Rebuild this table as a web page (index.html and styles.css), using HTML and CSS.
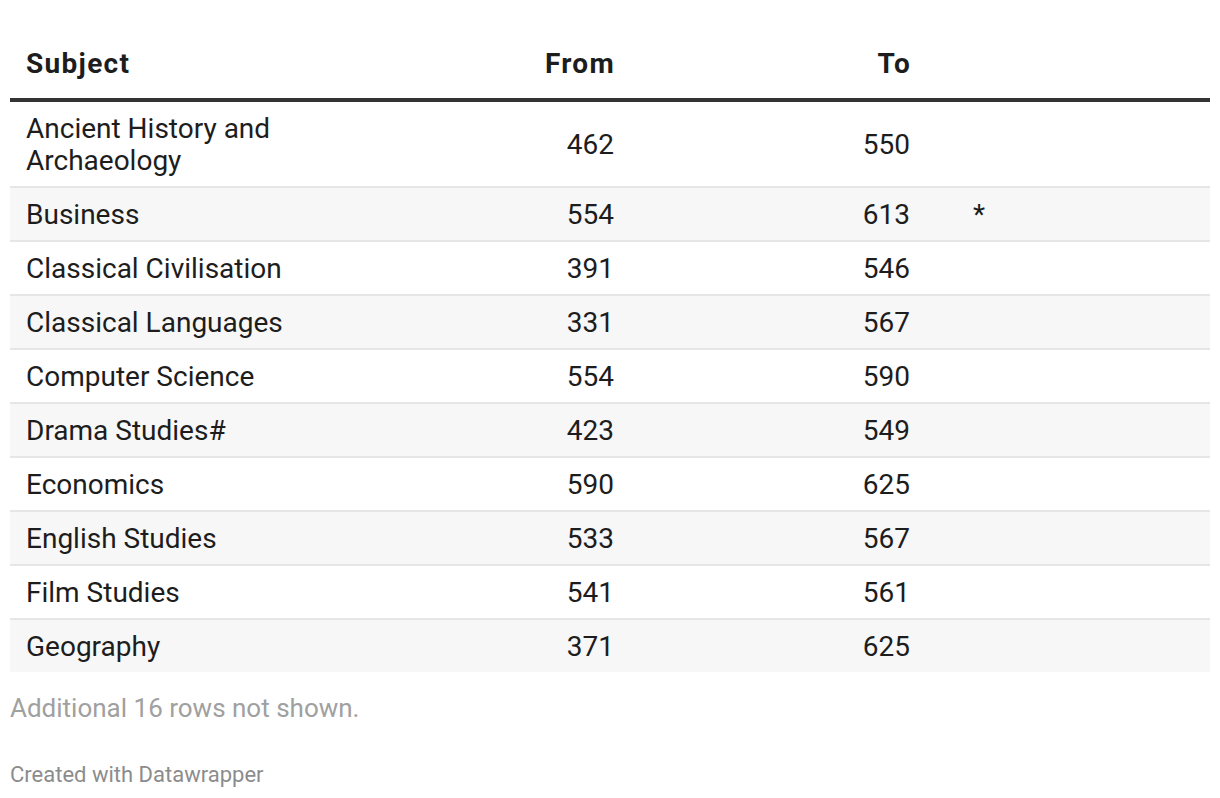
FILE: index.html
```html
<!DOCTYPE html>
<html lang="en">
<head>
<meta charset="utf-8">
<title>Table</title>
<link rel="stylesheet" href="styles.css">
</head>
<body>
<div class="chart">
  <table class="dw-table">
    <colgroup>
      <col class="c-subject">
      <col class="c-from">
      <col class="c-to">
      <col class="c-note">
    </colgroup>
    <thead>
      <tr>
        <th class="left">Subject</th>
        <th class="num">From</th>
        <th class="num">To</th>
        <th class="note"></th>
      </tr>
    </thead>
    <tbody>
      <tr><td class="left">Ancient History and Archaeology</td><td class="num">462</td><td class="num">550</td><td class="note"></td></tr>
      <tr class="alt"><td class="left">Business</td><td class="num">554</td><td class="num">613</td><td class="note">*</td></tr>
      <tr><td class="left">Classical Civilisation</td><td class="num">391</td><td class="num">546</td><td class="note"></td></tr>
      <tr class="alt"><td class="left">Classical Languages</td><td class="num">331</td><td class="num">567</td><td class="note"></td></tr>
      <tr><td class="left">Computer Science</td><td class="num">554</td><td class="num">590</td><td class="note"></td></tr>
      <tr class="alt"><td class="left">Drama Studies#</td><td class="num">423</td><td class="num">549</td><td class="note"></td></tr>
      <tr><td class="left">Economics</td><td class="num">590</td><td class="num">625</td><td class="note"></td></tr>
      <tr class="alt"><td class="left">English Studies</td><td class="num">533</td><td class="num">567</td><td class="note"></td></tr>
      <tr><td class="left">Film Studies</td><td class="num">541</td><td class="num">561</td><td class="note"></td></tr>
      <tr class="alt last"><td class="left">Geography</td><td class="num">371</td><td class="num">625</td><td class="note"></td></tr>
    </tbody>
  </table>
  <p class="more">Additional 16 rows not shown.</p>
  <p class="credit">Created with Datawrapper</p>
</div>
</body>
</html>
```

FILE: styles.css
```css
html, body {
  margin: 0;
  padding: 0;
  background: #ffffff;
}

body {
  font-family: Roboto, "Liberation Sans", Arial, sans-serif;
  color: #1d1d1d;
}

.chart {
  padding: 38px 10px 0 10px;
}

.dw-table {
  width: 1200px;
  border-collapse: separate;
  border-spacing: 0;
  table-layout: fixed;
  font-size: 28px;
  line-height: 32px;
}

.c-subject { width: 300px; }
.c-from { width: 320px; }
.c-to { width: 296px; }
.c-note { width: 284px; }

.dw-table th {
  font-weight: 700;
  letter-spacing: 1.3px;
  padding: 10px 15px 18px 16px;
  border-bottom: 4px solid #333333;
  vertical-align: bottom;
}

.dw-table td {
  font-weight: 400;
  padding: 11px 16px 9px 16px;
  border-bottom: 2px solid #e6e6e6;
  vertical-align: middle;
}

.dw-table tr.last td {
  border-bottom: none;
}

.dw-table tr.alt td {
  background: #f7f7f7;
}

.left { text-align: left; }
.num { text-align: right; }
.dw-table .note {
  text-align: left;
  padding-left: 47px;
}

.more {
  margin: 20px 0 0 0;
  font-size: 26px;
  line-height: 32px;
  color: #a0a0a0;
}

.credit {
  margin: 37px 0 0 0;
  font-size: 22px;
  line-height: 28px;
  color: #8c8c8c;
}
```
